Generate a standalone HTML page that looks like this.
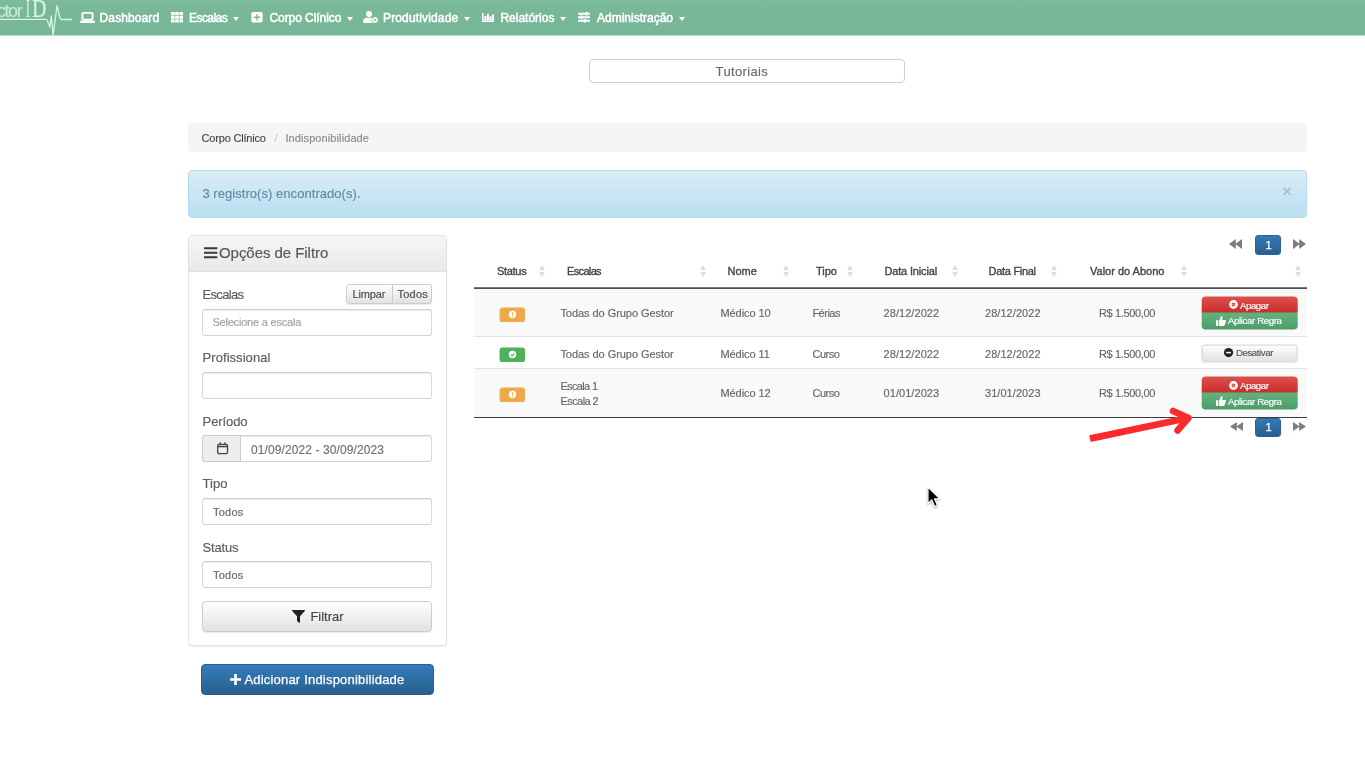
<!DOCTYPE html>
<html lang="pt-BR">
<head>
<meta charset="utf-8">
<title>Indisponibilidade - Corpo Clínico</title>
<style>
*{box-sizing:border-box;margin:0;padding:0}
html,body{width:1365px;height:767px;overflow:hidden;background:#fff}
body{filter:blur(.6px);font-family:"Liberation Sans",sans-serif;font-size:11px;color:#555;position:relative}
.abs,.t,section,nav,aside,main,header,div.b,svg.i{position:absolute}
section,nav,aside,main,header,.grp{position:absolute;left:0;top:0;width:0;height:0}
.t{white-space:pre;line-height:20px;text-decoration:none;font-style:normal;-webkit-text-stroke:.15px currentColor}
label.t{font-weight:400}
.serif{font-family:"Liberation Serif",serif}
.sb{-webkit-text-stroke:.35px currentColor}
nav .sb{-webkit-text-stroke:.5px currentColor}
.md{-webkit-text-stroke:.25px currentColor}
svg.i{overflow:visible}
/* navbar */
#navbg{left:0;top:0;width:1365px;height:36px;background:linear-gradient(#7cbb9c,#78b899 30%,#77b798);border-bottom:1px solid #b9dfcc}
.caret{position:absolute;width:0;height:0;border-left:3.8px solid transparent;border-right:3.8px solid transparent;border-top:4.2px solid #fff;top:16.6px;margin-left:-.4px}
/* boxes */
#tut{left:589px;top:59px;width:316px;height:24px;border:1px solid #cfcfcf;border-radius:4px;background:#fff}
#crumb{left:188px;top:123px;width:1119px;height:29px;background:#f5f5f5;border-radius:4px}
#alert{left:188px;top:170px;width:1119px;height:48px;border:1px solid #b3dbee;border-radius:4px;background:linear-gradient(#d9edf7,#b9def0)}
#panel{left:188px;top:235px;width:259px;height:411px;border:1px solid #e2e2e2;border-radius:4px;background:#fff;box-shadow:0 1px 2px rgba(0,0,0,.06)}
#phead{left:189px;top:236px;width:257px;height:36px;background:linear-gradient(#f6f6f6,#e9e9e9);border-bottom:1px solid #e0e0e0;border-radius:3px 3px 0 0}
.inp{position:absolute;left:202px;width:230px;height:27px;border:1px solid #d9d9d9;border-top-color:#cfcfcf;border-bottom-color:#d2d2d2;border-radius:3px;background:#fff;box-shadow:inset 0 1px 1px rgba(0,0,0,.075)}
.addon{position:absolute;left:202px;top:435px;width:39px;height:27px;border:1px solid #ccc;border-radius:3px 0 0 3px;background:#eee}
.btnd{position:absolute;border:1px solid #ccc;border-radius:3px;background:linear-gradient(#fff,#e2e2e2);box-shadow:0 1px 1px rgba(0,0,0,.08)}
#badd{left:201px;top:664px;width:233px;height:31px;border:1px solid #2a5f8f;border-radius:4px;background:linear-gradient(#357cb9,#27608f)}
/* table */
.row{position:absolute;left:474px;width:833px}
.sort{position:absolute;top:265px;width:7px;height:12px}
.sort:before,.sort:after{content:"";position:absolute;left:0;width:0;height:0;border-left:3.5px solid transparent;border-right:3.5px solid transparent}
.sort:before{top:0;border-bottom:5px solid #dcdcdc}
.sort:after{bottom:0;border-top:5px solid #dcdcdc}
.badge{position:absolute;left:499px;width:26px;height:15px;border-radius:3px;transform:translate(.3px,.3px) scale(.98,.97)}
.bw{background:#efa94c}
.bs{background:#51b15a}
.act{position:absolute;left:1201px;width:96px;height:33px;border-radius:4px;background:linear-gradient(#d9504c 0,#dc4f4b 1px,#c9302c 15.4px,#b34a3c 15.8px,#58a675 16.4px,#63b17f 17.4px,#4e9e6a 32px,#4a9865 100%);transform:translate(.7px,.4px)}
.pg{position:absolute;left:1255px;width:26px;height:20px;border-radius:3px;background:linear-gradient(#3379b6,#27608f);border:1px solid #2a6496}
</style>
</head>
<body>

<nav>
<div class="b" id="navbg"></div>
<!-- logo line -->
<svg class="i" style="left:0;top:0" width="80" height="36" viewBox="0 0 80 36"><path d="M0 19.3H45.5L47.2 20.2L49.8 27L51.3 16L53.1 35L57.1 5.5L60.2 18.8L61.5 19.5H72" fill="none" stroke="#d4f7e3" stroke-width="1.3" stroke-linejoin="round"/></svg>
<a class="t sb" style="left:99.6px;top:7.6px;font-size:12px;color:#fff;letter-spacing:0.1px;">Dashboard</a>
<a class="t sb" style="left:189px;top:7.6px;font-size:12px;color:#fff;letter-spacing:-0.55px;">Escalas</a>
<a class="t sb" style="left:269.4px;top:7.6px;font-size:12px;color:#fff;letter-spacing:-0.05px;">Corpo Clínico</a>
<a class="t sb" style="left:383px;top:7.6px;font-size:12px;color:#fff;letter-spacing:0.15px;">Produtividade</a>
<a class="t sb" style="left:500.4px;top:7.6px;font-size:12px;color:#fff;">Relatórios</a>
<a class="t sb" style="left:597px;top:7.6px;font-size:12px;color:#fff;">Administração</a>
<span class="t" style="left:-3px;top:0.6px;font-size:18px;color:#c8e8d7;letter-spacing:-1.45px;">ctor</span>
<span class="t serif" style="left:25.6px;top:-0.7px;font-size:25px;color:#d6f7e4;transform:scaleX(.45);transform-origin:0 0;">I</span>
<span class="t serif" style="left:32.2px;top:-0.7px;font-size:25px;color:#d6f7e4;transform:scaleX(.8);transform-origin:0 0;">D</span>
<!-- laptop -->
<svg class="i" style="left:80px;top:12px" width="15" height="11" viewBox="0 0 15 11"><rect x="2.4" y=".9" width="10.2" height="6.9" rx="1" fill="none" stroke="#fff" stroke-width="1.9"/><path d="M0 8.8h15v.7a1.5 1.5 0 0 1-1.5 1.5h-12A1.5 1.5 0 0 1 0 9.5z" fill="#fff"/></svg>
<!-- th -->
<svg class="i" style="left:171px;top:12px" width="12" height="11" viewBox="0 0 12 11"><g fill="#fff"><rect x="0" y="0" width="3.6" height="3.1"/><rect x="4.2" y="0" width="3.6" height="3.1"/><rect x="8.4" y="0" width="3.6" height="3.1"/><rect x="0" y="3.7" width="3.6" height="3.1"/><rect x="4.2" y="3.7" width="3.6" height="3.1"/><rect x="8.4" y="3.7" width="3.6" height="3.1"/><rect x="0" y="7.4" width="3.6" height="3.1"/><rect x="4.2" y="7.4" width="3.6" height="3.1"/><rect x="8.4" y="7.4" width="3.6" height="3.1"/></g></svg>
<div class="caret" style="left:233.5px"></div>
<!-- plus-square -->
<svg class="i" style="left:251px;top:12px" width="12" height="11" viewBox="0 0 12 11"><rect x=".4" y="0" width="11.2" height="10.6" rx="1.6" fill="#fff"/><path d="M6 2.2v6.2M2.9 5.3h6.2" stroke="#77b798" stroke-width="1.4"/></svg>
<div class="caret" style="left:347px"></div>
<!-- user-lock -->
<svg class="i" style="left:363px;top:11px" width="15" height="12" viewBox="0 0 15 12"><circle cx="6" cy="3" r="3" fill="#fff"/><path d="M0 12v-1.6C0 8.2 1.8 6.8 4 6.8h4c1 0 1.9.3 2.6.8v4.4z" fill="#fff"/><circle cx="12" cy="9" r="3.3" fill="#fff" stroke="#77b798" stroke-width=".8"/><circle cx="12" cy="9" r="1" fill="#77b798"/></svg>
<div class="caret" style="left:464px"></div>
<!-- chart -->
<svg class="i" style="left:482px;top:13px" width="12" height="9" viewBox="0 0 12 9"><path d="M.8 0v8.2H12" fill="none" stroke="#fff" stroke-width="1.6"/><path d="M3.4 7.4V3M5.9 7.4V.8M8.4 7.4V3.4M10.9 7.4V1.6" stroke="#fff" stroke-width="2.1"/></svg>
<div class="caret" style="left:560px"></div>
<!-- sliders -->
<svg class="i" style="left:578px;top:12px" width="12" height="11" viewBox="0 0 12 11"><path d="M0 1.8h12M0 5.3h12M0 8.8h12" stroke="#fff" stroke-width="1.9"/><path d="M8.5 0v3.6M3.5 3.5v3.6M7 7v3.6" stroke="#fff" stroke-width="2.4"/></svg>
<div class="caret" style="left:679.5px"></div>
</nav>

<header>
<div class="b" id="tut"></div>
<div class="b" id="crumb"></div>
<div class="b" id="alert"></div>
<span class="t" style="left:715.6px;top:62.4px;font-size:13px;color:#6a6a6a;letter-spacing:0.35px;">Tutoriais</span>
<a class="t" style="left:201.6px;top:128.4px;font-size:11px;color:#444;letter-spacing:-0.2px;">Corpo Clínico</a>
<span class="t" style="left:274.5px;top:128.4px;font-size:11px;color:#ccc;">/</span>
<span class="t" style="left:285.4px;top:128.4px;font-size:11px;color:#8a8a8a;letter-spacing:0.1px;">Indisponibilidade</span>
<span class="t" style="left:202.4px;top:184.4px;font-size:13px;color:#5b8da6;letter-spacing:0.05px;">3 registro(s) encontrado(s).</span>
<span class="t" style="left:1282px;top:182.2px;font-size:17px;color:#9dbac9;">×</span>
</header>

<aside>
<div class="b" id="panel"></div>
<div class="b" id="phead"></div>
<!-- bars -->
<svg class="i" style="left:203.7px;top:247px" width="13.3" height="12" viewBox="0 0 13.3 12"><path d="M0 1.3h13.3M0 5.8h13.3M0 10.3h13.3" stroke="#3a3a3a" stroke-width="2.1"/></svg>
<div class="btnd" style="left:346px;top:284px;width:47px;height:20px;border-radius:3px 0 0 3px"></div>
<div class="btnd" style="left:392px;top:284px;width:40px;height:20px;border-radius:0 3px 3px 0"></div>
<div class="inp" style="top:309px"></div>
<div class="inp" style="top:372px"></div>
<div class="inp" style="top:435px"></div>
<div class="addon"></div>
<!-- calendar -->
<svg class="i" style="left:216.5px;top:442.3px" width="11.2" height="12.6" viewBox="0 0 12 13"><rect x=".7" y="2.2" width="10.6" height="10.1" rx="1.5" fill="none" stroke="#444" stroke-width="1.4"/><path d="M.7 4.6h10.6" stroke="#444" stroke-width="1.6"/><path d="M3.4 0v3M8.6 0v3" stroke="#444" stroke-width="1.4"/></svg>
<div class="inp" style="top:498px"></div>
<div class="inp" style="top:561px"></div>
<div class="btnd" style="left:202px;top:601px;width:230px;height:31px;border-radius:4px"></div>
<!-- filter -->
<svg class="i" style="left:292px;top:610px" width="13" height="13" viewBox="0 0 13 13"><path d="M.3 0h12.4c.4 0 .5.4.3.7L8 6.2v6.2c0 .4-.4.6-.7.4L5.3 11.3c-.2-.1-.3-.3-.3-.5V6.2L0 .7C-.2.4-.1 0 .3 0z" fill="#222"/></svg>
<div class="b" id="badd"></div>
<!-- plus -->
<svg class="i" style="left:230px;top:674px" width="11" height="11" viewBox="0 0 11 11"><path d="M5.5 0v11M0 5.5h11" stroke="#fff" stroke-width="2.6"/></svg>
<span class="t" style="left:219px;top:243px;font-size:15px;color:#555;letter-spacing:-0.05px;">Opções de Filtro</span>
<label class="t" style="left:202.6px;top:285.4px;font-size:13px;color:#5c5c5c;letter-spacing:-0.7px;">Escalas</label>
<label class="t" style="left:202.6px;top:348px;font-size:13px;color:#5c5c5c;letter-spacing:0.05px;">Profissional</label>
<label class="t" style="left:202.6px;top:411.6px;font-size:13px;color:#5c5c5c;letter-spacing:-0.1px;">Período</label>
<label class="t" style="left:202.6px;top:474.4px;font-size:13px;color:#5c5c5c;">Tipo</label>
<label class="t" style="left:202.6px;top:538px;font-size:13px;color:#5c5c5c;letter-spacing:-0.2px;">Status</label>
<span class="t" style="left:352.4px;top:283.6px;font-size:11px;color:#4a4a4a;letter-spacing:-0.1px;">Limpar</span>
<span class="t" style="left:397.6px;top:283.6px;font-size:11px;color:#4a4a4a;letter-spacing:0.2px;">Todos</span>
<span class="t" style="left:212.4px;top:312.4px;font-size:11px;color:#a0a0a0;letter-spacing:-0.2px;">Selecione a escala</span>
<span class="t" style="left:251px;top:439.6px;font-size:12px;color:#707070;letter-spacing:0.1px;">01/09/2022 - 30/09/2023</span>
<span class="t" style="left:213px;top:501.6px;font-size:11px;color:#666;letter-spacing:0.25px;">Todos</span>
<span class="t" style="left:213px;top:564.6px;font-size:11px;color:#666;letter-spacing:0.25px;">Todos</span>
<span class="t" style="left:310.4px;top:607px;font-size:13px;color:#444;">Filtrar</span>
<span class="t md" style="left:244.4px;top:670px;font-size:13px;color:#fff;letter-spacing:0.2px;">Adicionar Indisponibilidade</span>
</aside>

<main>
<!-- top pagination -->
<div class="grp">
<svg class="i" style="left:1229px;top:239px" width="13" height="10" viewBox="0 0 13 10"><path d="M6.8 0v10L0 5zM13 0v10L6.2 5z" fill="#7d7d7d"/></svg>
<div class="pg" style="top:235px"></div>
<svg class="i" style="left:1293px;top:239px" width="13" height="10" viewBox="0 0 13 10"><path d="M0 0v10l6.8-5zM6.2 0v10L13 5z" fill="#7d7d7d"/></svg>
<span class="t md" style="left:1265.6px;top:235px;font-size:11px;color:#fff;">1</span>
</div>
<!-- table head -->
<div class="grp">
<span class="t sb" style="left:497px;top:261.2px;font-size:11px;color:#444;letter-spacing:-0.3px;">Status</span>
<span class="t sb" style="left:567px;top:261.2px;font-size:11px;color:#444;letter-spacing:-0.65px;">Escalas</span>
<span class="t sb" style="left:727.4px;top:261.2px;font-size:11px;color:#444;letter-spacing:0.05px;">Nome</span>
<span class="t sb" style="left:816px;top:261.2px;font-size:11px;color:#444;">Tipo</span>
<span class="t sb" style="left:884.4px;top:261.2px;font-size:11px;color:#444;letter-spacing:-0.15px;">Data Inicial</span>
<span class="t sb" style="left:988.6px;top:261.2px;font-size:11px;color:#444;letter-spacing:-0.3px;">Data Final</span>
<span class="t sb" style="left:1090px;top:261.2px;font-size:11px;color:#444;">Valor do Abono</span>
<i class="sort" style="left:538.5px"></i>
<i class="sort" style="left:699.5px"></i>
<i class="sort" style="left:782.5px"></i>
<i class="sort" style="left:847px"></i>
<i class="sort" style="left:952px"></i>
<i class="sort" style="left:1050.5px"></i>
<i class="sort" style="left:1180.5px"></i>
<i class="sort" style="left:1294.5px"></i>
<div class="row" style="top:287px;height:2px;background:linear-gradient(#8c8c8c,#3d3d3d)"></div>
</div>
<!-- row 1 -->
<div class="grp">
<div class="row" style="top:289px;height:47px;background:#f9f9f9"></div>
<div class="badge bw" style="top:307px"></div>
<svg class="i" style="left:508px;top:310px" width="9" height="9" viewBox="0 0 9 9"><circle cx="4.5" cy="4.5" r="3.7" fill="#fff"/><path d="M4.5 2.4v2.6" stroke="#efa94c" stroke-width="1.1"/><circle cx="4.5" cy="6.4" r=".65" fill="#efa94c"/></svg>
<div class="act" style="top:296px"></div>
<svg class="i" style="left:1229.2px;top:300.3px" width="9" height="9" viewBox="0 0 9 9"><circle cx="4.5" cy="4.5" r="4.4" fill="#fff"/><path d="M2.9 2.9l3.2 3.2M6.1 2.9L2.9 6.1" stroke="#d2433f" stroke-width="1.3"/></svg>
<svg class="i" style="left:1216.4px;top:316px" width="10" height="10" viewBox="0 0 10 10"><path d="M0 4.3h2.3V10H0zM3 4.6C4.3 3.6 4.6 2.3 4.8.6 5 0 6.6.1 6.6 1.7c0 .8-.3 1.6-.6 2.3h3c.6 0 1 .5 1 1 0 .4-.2.7-.5.9.3.5.2 1.1-.3 1.4.2.5 0 1-.4 1.3.1.8-.4 1.4-1.3 1.4H5.3C4.4 10 3.7 9.6 3 9.4z" fill="#fff"/></svg>
<span class="t" style="left:560.4px;top:303.1px;font-size:11px;color:#666;letter-spacing:-0.05px;">Todas do Grupo Gestor</span>
<span class="t" style="left:720.4px;top:303.1px;font-size:11px;color:#666;letter-spacing:-0.05px;">Médico 10</span>
<span class="t" style="left:812.4px;top:303.1px;font-size:11px;color:#666;letter-spacing:-0.5px;">Férias</span>
<span class="t" style="left:883.6px;top:303.1px;font-size:11px;color:#666;letter-spacing:0.05px;">28/12/2022</span>
<span class="t" style="left:985px;top:303.1px;font-size:11px;color:#666;letter-spacing:0.05px;">28/12/2022</span>
<span class="t" style="left:1099px;top:303.1px;font-size:11px;color:#666;letter-spacing:-0.35px;">R$ 1.500,00</span>
<span class="t" style="left:1240px;top:295.5px;font-size:9.6px;color:#fff;letter-spacing:-0.4px;">Apagar</span>
<span class="t" style="left:1228px;top:311.3px;font-size:9.6px;color:#fff;letter-spacing:-0.35px;">Aplicar Regra</span>
</div>
<!-- row 2 -->
<div class="grp">
<div class="row" style="top:336px;height:1px;background:#e4e4e4"></div>
<div class="badge bs" style="top:347px"></div>
<svg class="i" style="left:508px;top:350px" width="9" height="9" viewBox="0 0 9 9"><circle cx="4.5" cy="4.5" r="3.7" fill="#fff"/><path d="M2.8 4.6l1.3 1.3 2.2-2.5" fill="none" stroke="#51b15a" stroke-width="1.2"/></svg>
<div class="btnd" style="left:1201px;top:344px;width:96px;height:17px;transform:translate(.7px,.6px);border-color:#d2d2d2"></div>
<svg class="i" style="left:1224.4px;top:348.4px" width="9.2" height="9.2" viewBox="0 0 9.2 9.2"><circle cx="4.6" cy="4.6" r="4.6" fill="#222"/><path d="M2.2 4.6h4.8" stroke="#fff" stroke-width="1.5"/></svg>
<span class="t" style="left:560.4px;top:343.6px;font-size:11px;color:#666;letter-spacing:-0.05px;">Todas do Grupo Gestor</span>
<span class="t" style="left:720.4px;top:343.6px;font-size:11px;color:#666;letter-spacing:-0.05px;">Médico 11</span>
<span class="t" style="left:812.4px;top:343.6px;font-size:11px;color:#666;letter-spacing:-0.45px;">Curso</span>
<span class="t" style="left:883.6px;top:343.6px;font-size:11px;color:#666;letter-spacing:0.05px;">28/12/2022</span>
<span class="t" style="left:985px;top:343.6px;font-size:11px;color:#666;letter-spacing:0.05px;">28/12/2022</span>
<span class="t" style="left:1099px;top:343.6px;font-size:11px;color:#666;letter-spacing:-0.35px;">R$ 1.500,00</span>
<span class="t" style="left:1236px;top:343.3px;font-size:9.6px;color:#555;letter-spacing:-0.4px;">Desativar</span>
</div>
<!-- row 3 -->
<div class="grp">
<div class="row" style="top:368px;height:49px;background:#f9f9f9;border-top:1px solid #e4e4e4"></div>
<div class="badge bw" style="top:387px"></div>
<svg class="i" style="left:508px;top:390px" width="9" height="9" viewBox="0 0 9 9"><circle cx="4.5" cy="4.5" r="3.7" fill="#fff"/><path d="M4.5 2.4v2.6" stroke="#efa94c" stroke-width="1.1"/><circle cx="4.5" cy="6.4" r=".65" fill="#efa94c"/></svg>
<div class="act" style="top:376.4px"></div>
<svg class="i" style="left:1229.2px;top:380.7px" width="9" height="9" viewBox="0 0 9 9"><circle cx="4.5" cy="4.5" r="4.4" fill="#fff"/><path d="M2.9 2.9l3.2 3.2M6.1 2.9L2.9 6.1" stroke="#d2433f" stroke-width="1.3"/></svg>
<svg class="i" style="left:1216.4px;top:396.4px" width="10" height="10" viewBox="0 0 10 10"><path d="M0 4.3h2.3V10H0zM3 4.6C4.3 3.6 4.6 2.3 4.8.6 5 0 6.6.1 6.6 1.7c0 .8-.3 1.6-.6 2.3h3c.6 0 1 .5 1 1 0 .4-.2.7-.5.9.3.5.2 1.1-.3 1.4.2.5 0 1-.4 1.3.1.8-.4 1.4-1.3 1.4H5.3C4.4 10 3.7 9.6 3 9.4z" fill="#fff"/></svg>
<span class="t" style="left:560.4px;top:376px;font-size:11px;color:#666;letter-spacing:-0.65px;">Escala 1</span>
<span class="t" style="left:560.4px;top:391px;font-size:11px;color:#666;letter-spacing:-0.55px;">Escala 2</span>
<span class="t" style="left:720.4px;top:383.2px;font-size:11px;color:#666;letter-spacing:-0.05px;">Médico 12</span>
<span class="t" style="left:812.4px;top:383.2px;font-size:11px;color:#666;letter-spacing:-0.45px;">Curso</span>
<span class="t" style="left:883.6px;top:383.2px;font-size:11px;color:#666;letter-spacing:0.05px;">01/01/2023</span>
<span class="t" style="left:985px;top:383.2px;font-size:11px;color:#666;letter-spacing:0.05px;">31/01/2023</span>
<span class="t" style="left:1099px;top:383.2px;font-size:11px;color:#666;letter-spacing:-0.35px;">R$ 1.500,00</span>
<span class="t" style="left:1240px;top:375.9px;font-size:9.6px;color:#fff;letter-spacing:-0.4px;">Apagar</span>
<span class="t" style="left:1228px;top:391.7px;font-size:9.6px;color:#fff;letter-spacing:-0.35px;">Aplicar Regra</span>
<div class="row" style="top:417px;height:1px;background:#3c3c3c"></div>
</div>
<!-- bottom pagination -->
<div class="grp">
<svg class="i" style="left:1229.5px;top:422px" width="13" height="9" viewBox="0 0 13 10" preserveAspectRatio="none"><path d="M6.8 0v10L0 5zM13 0v10L6.2 5z" fill="#7d7d7d"/></svg>
<div class="pg" style="top:418px;height:19px"></div>
<svg class="i" style="left:1293px;top:422px" width="13" height="9" viewBox="0 0 13 10" preserveAspectRatio="none"><path d="M0 0v10l6.8-5zM6.2 0v10L13 5z" fill="#7d7d7d"/></svg>
<span class="t md" style="left:1265.6px;top:417.2px;font-size:11px;color:#fff;">1</span>
</div>
</main>

<!-- annotation arrow + mouse pointer -->
<svg class="i" style="left:0;top:0;pointer-events:none" width="1365" height="767" viewBox="0 0 1365 767">
<path d="M1090 438.6L1188 418" fill="none" stroke="#fb2b2d" stroke-width="6.8" stroke-linecap="butt"/>
<path d="M1173 411L1188.5 418L1177.5 430.5" fill="none" stroke="#fb2b2d" stroke-width="6.5" stroke-linecap="round" stroke-linejoin="round"/>
<path d="M928 487v16.5l3.8-3.6 2.9 6.6 2.7-1.2-2.9-6.5h5.3z" fill="#000" stroke="#fff" stroke-width="1.1" stroke-linejoin="round" style="filter:drop-shadow(.5px 1px 1px rgba(0,0,0,.35))"/>
</svg>
</body>
</html>
